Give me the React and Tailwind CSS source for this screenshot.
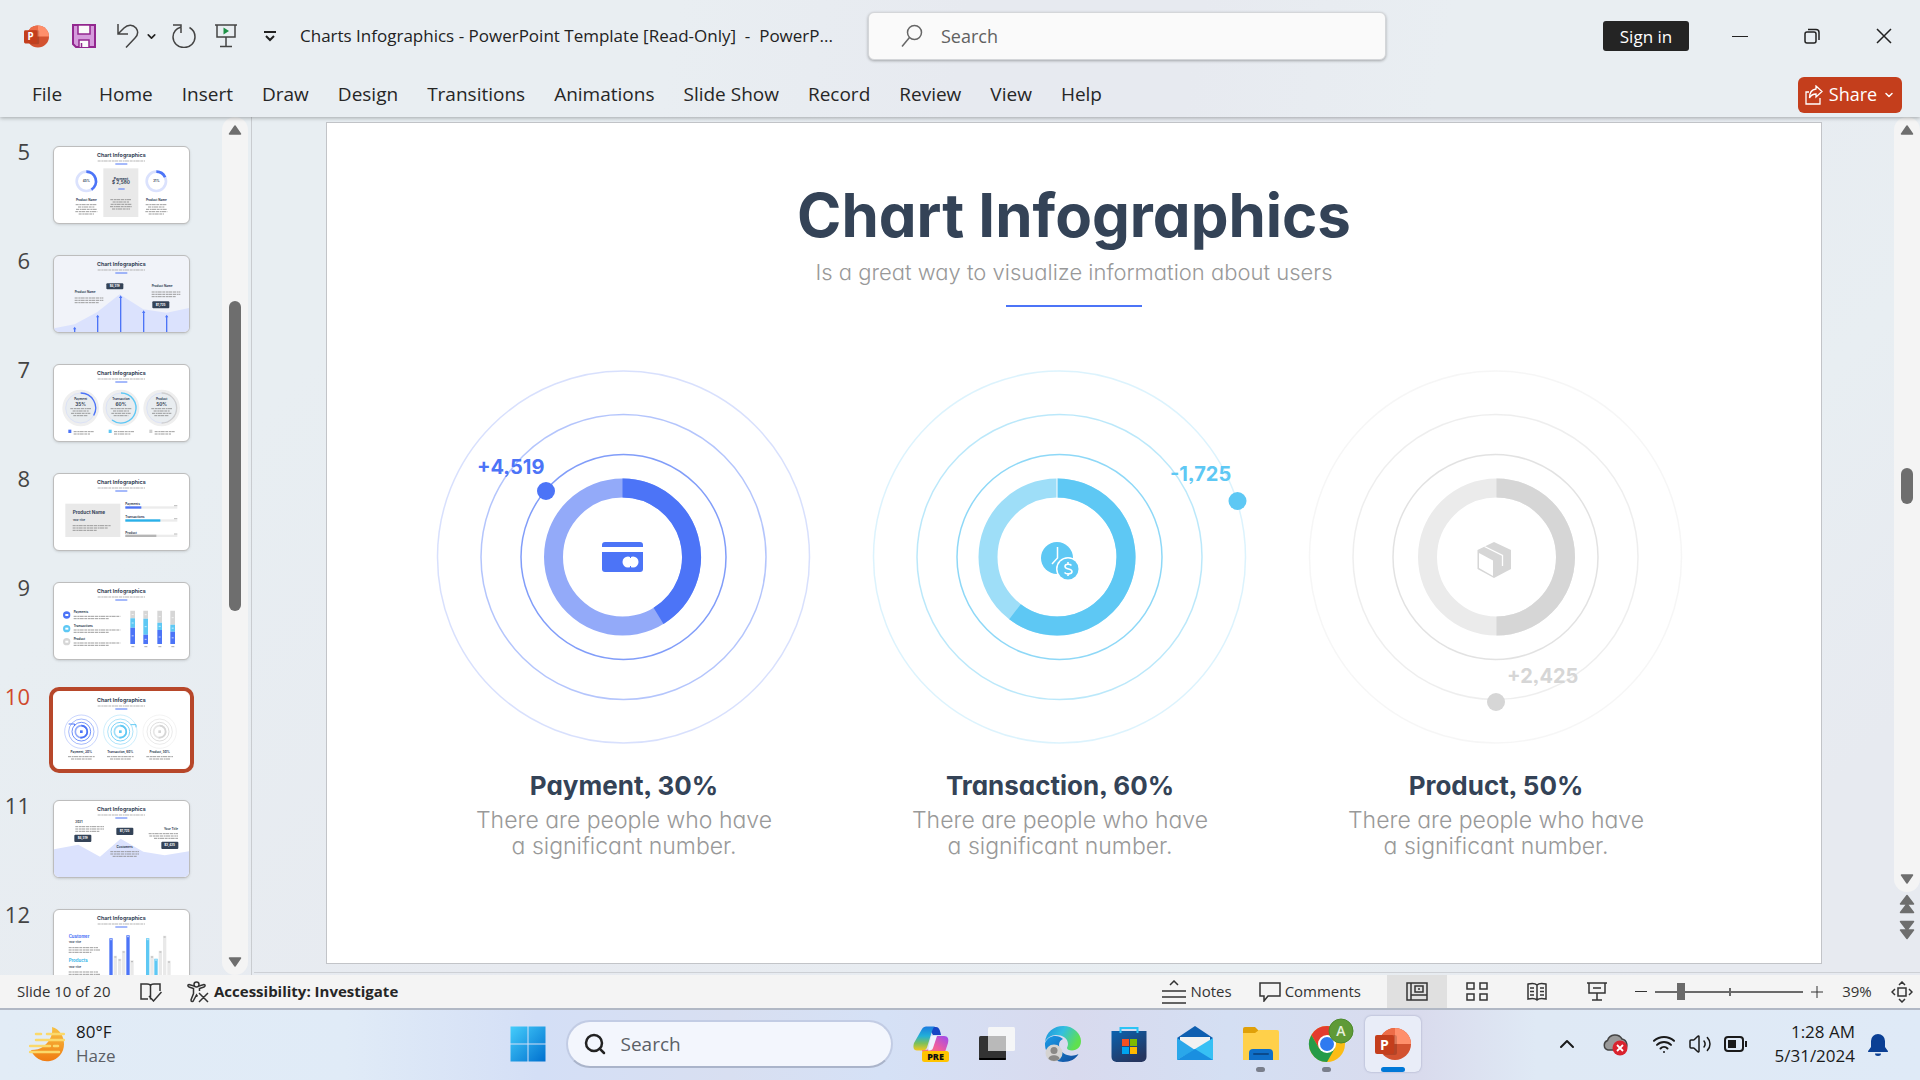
import React from "react";
import { Search, Wifi, Volume2, ChevronUp, ChevronDown } from "lucide-react";

const BLUE = "#4c74f7";
const CYAN = "#5ec8f4";
const GRAY = "#d6d6d6";
const INK = "#344357";

const polar = (cx, cy, r, deg) => {
  const a = ((deg - 90) * Math.PI) / 180;
  return [cx + r * Math.cos(a), cy + r * Math.sin(a)];
};

function Arc({ cx, cy, r, from, to, color, width }) {
  const [x1, y1] = polar(cx, cy, r, from);
  const [x2, y2] = polar(cx, cy, r, to);
  return (
    <path
      d={`M${x1} ${y1}A${r} ${r} 0 ${to - from > 180 ? 1 : 0} 1 ${x2} ${y2}`}
      fill="none"
      stroke={color}
      strokeWidth={width}
    />
  );
}

/* ---------- Logos and icons ---------- */

function PowerPointLogo({ className }) {
  return (
    <svg viewBox="0 0 36 36" className={className} aria-hidden="true">
      <circle cx="20" cy="18" r="16" fill="#d35230" />
      <path d="M20 2A16 16 0 0 0 4 18h16z" fill="#ed6c47" />
      <path d="M20 2a16 16 0 0 1 16 16H20z" fill="#ff8f6b" />
      <path d="M11 9h9a2 2 0 0 1 2 2v16a2 2 0 0 1-2 2H9z" fill="#000" opacity=".15" />
      <rect x="0" y="9" width="19" height="19" rx="2" fill="#c43e1c" />
      <text x="9.500" y="23.500" textAnchor="middle" fontSize="14" fontWeight="700" fill="#fff" fontFamily="Open Sans, sans-serif">P</text>
    </svg>
  );
}

function SaveIcon() {
  return (
    <svg viewBox="0 0 24 24" className="size-6" fill="none" aria-hidden="true">
      <path d="M1 1h22v22H4l-3-3z" fill="#d59bdc" stroke="#92278f" strokeWidth="2" />
      <path d="M6 1h12v9H6z" fill="#fafafa" stroke="#92278f" strokeWidth="1.500" />
      <path d="M7 23v-7h10v7" fill="#fafafa" stroke="#92278f" strokeWidth="1.500" />
      <path d="M9.500 23v-4" stroke="#92278f" strokeWidth="1.500" />
    </svg>
  );
}

function UndoIcon() {
  return (
    <svg viewBox="0 0 24 24" className="size-6" fill="none" stroke="#444" strokeWidth="1.500" aria-hidden="true">
      <path d="M2 0v10h10M2 10l6-6c4-4 9-3.500 12 0 2.500 3.500 2 7-1 10L10 23.500" />
    </svg>
  );
}

function RedoIcon() {
  return (
    <svg viewBox="0 0 24 24" className="size-6" fill="none" stroke="#444" strokeWidth="1.500" aria-hidden="true">
      <path d="M1 1h8v8M9 1v2C3 5 1 9 1 13a11 10.500 0 0 0 22 0c0-4-2-7.500-5.500-9.500" />
    </svg>
  );
}

function PresentIcon() {
  return (
    <svg viewBox="0 0 24 24" className="size-6" fill="none" stroke="#444" strokeWidth="1.500" aria-hidden="true">
      <path d="M1 1h22M3 1v12h18V1M12 13v9M6 22.500h12" />
      <path d="M9.500 3.500v7L15 7z" fill="#1f9246" stroke="none" />
    </svg>
  );
}

function CustomizeIcon() {
  return (
    <svg viewBox="0 0 12 12" className="size-3" fill="none" stroke="#222" strokeWidth="2" aria-hidden="true">
      <path d="M0 2h12M2 6l4 4 4-4" />
    </svg>
  );
}

function ShareIcon() {
  return (
    <svg viewBox="0 0 18 20" className="h-5 w-[18px]" fill="none" stroke="#fff" strokeWidth="1.300" aria-hidden="true">
      <path d="M4 7H1v12h14v-6" />
      <path d="M11 1l6 5.500L11 12V9C8 9 6 10 4.500 13 4.500 8 7 4.500 11 4z" />
    </svg>
  );
}

function ProofIcon() {
  return (
    <svg viewBox="0 0 22 20" className="h-5 w-[22px]" fill="none" stroke="#333" strokeWidth="1.500" aria-hidden="true">
      <path d="M10.500 3v14.500M8 17H1V2h6c2 0 3.500.5 3.500 2 0-1.500 1.500-2 3.500-2h6v7M9 14l4.500 5L21.500 10" />
    </svg>
  );
}

function AccessIcon() {
  return (
    <svg viewBox="0 0 22 22" className="size-[22px]" fill="none" stroke="#333" strokeWidth="1.500" aria-hidden="true">
      <circle cx="9.500" cy="3.500" r="2.500" />
      <path d="M7 5L2 3.500C.5 3.500.5 5.500 2 6l4.500 1.500v5L4 19c0 2 2 2 2.500.5L9.500 14l1 1.500M12 5l5-1.500c1.500 0 1.500 2 0 2.500l-4.500 1.500V10M12 12l9 9M21 12l-9 9" />
    </svg>
  );
}

function NotesIcon() {
  return (
    <svg viewBox="0 0 24 24" className="size-6" fill="none" stroke="#333" strokeWidth="1.500" aria-hidden="true">
      <path d="M8 5l4-4 4 4M0 11h24M0 17h24M0 23h24" />
    </svg>
  );
}

function CommentIcon() {
  return (
    <svg viewBox="0 0 22 20" className="h-5 w-[22px]" fill="none" stroke="#333" strokeWidth="1.500" aria-hidden="true">
      <path d="M1 1h20v13H9l-4 5v-5H1z" />
    </svg>
  );
}

function ViewIcon({ kind }) {
  const paths = {
    normal: "M1 1h20v17H1zM5 1v17M5 13h16M9 4h8v6H9zM12 7h2",
    sorter: "M1 1h7v6H1zM14 1h7v6h-7zM1 12h7v6H1zM14 12h7v6h-7z",
    reading: "M11 3v15M2 17V2c4-1 7-1 9 1 2-2 5-2 9-1v15c-4-1-7-1-9 1-2-2-5-2-9-1zM4 6h4M4 9.500h4M4 13h4M14 6h4M14 9.500h4M14 13h4",
    show: "M1 1h20M3 1v10h16V1M7 6h8M11 11v7M6 18h10",
  };
  return (
    <svg viewBox="0 0 22 19" className="h-[19px] w-[22px]" fill="none" stroke="#333" strokeWidth="1.500" aria-hidden="true">
      <path d={paths[kind]} />
    </svg>
  );
}

function FitIcon() {
  return (
    <svg viewBox="0 0 22 22" className="size-[22px]" fill="none" stroke="#333" strokeWidth="1.500" aria-hidden="true">
      <path d="M7 7h8v8H7zM8 4l3-3 3 3M8 18l3 3 3-3M4 8l-3 3 3 3M18 8l3 3-3 3" />
    </svg>
  );
}

function HazeIcon() {
  return (
    <svg viewBox="0 0 36 36" className="size-9" fill="none" strokeLinecap="round" aria-hidden="true">
      <defs>
        <linearGradient id="haze" x1="0" y1="0" x2="0" y2="1">
          <stop offset="0" stopColor="#f7c244" />
          <stop offset="1" stopColor="#f07c12" />
        </linearGradient>
      </defs>
      <path d="M23 1c8 2 12 10 12 17a17 17 0 0 1-33 6c5 0 9-1 13-4 6-5 9-11 8-19z" fill="url(#haze)" />
      <path d="M7 8h5M18 8h17M7 14h28M1 20h20M25 20h4M1 26h29" stroke="#fbd96b" strokeWidth="2.500" />
    </svg>
  );
}

function StartIcon() {
  return (
    <svg viewBox="0 0 36 36" className="size-9" aria-hidden="true">
      <defs>
        <linearGradient id="win" x1="0" y1="0" x2="1" y2="1">
          <stop offset="0" stopColor="#45cdfb" />
          <stop offset="1" stopColor="#0070cf" />
        </linearGradient>
      </defs>
      <path d="M.5.5h17v17H.5zM18.500.5h17v17h-17zM.5 18.500h17v17H.5zM18.500 18.500h17v17h-17z" fill="url(#win)" />
    </svg>
  );
}

function CopilotIcon() {
  return (
    <svg viewBox="0 0 36 36" className="size-9" aria-hidden="true">
      <defs>
        <linearGradient id="cpa" x1="0" y1="0" x2="0" y2="1">
          <stop offset="0" stopColor="#1b7be0" />
          <stop offset=".4" stopColor="#22b0d8" />
          <stop offset=".7" stopColor="#7cc05a" />
          <stop offset="1" stopColor="#f4c81d" />
        </linearGradient>
        <linearGradient id="cpb" x1="1" y1="0" x2="0" y2="1">
          <stop offset="0" stopColor="#9a4bf0" />
          <stop offset=".5" stopColor="#ee5ca0" />
          <stop offset="1" stopColor="#fb8a5c" />
        </linearGradient>
      </defs>
      <path d="M15 1h8c3 0 4 3 5 8h-8z" fill="#1745c4" />
      <path d="M9 3c1-2 3-2.500 6-2.500h7c-2 1-3 4-4 8l-4 13c-.7 2-2 3-4 3H4C0 24.500 0 20 1 17z" fill="url(#cpa)" />
      <path d="M21 10h10c4 0 5 3 4 7l-3 9c-1 2-2 3-4 3h-12c-3 0-7-1-7-5h3c3 0 4-1 5-4z" fill="url(#cpb)" />
      <path d="M18 10h6l-4 12c-.7 2-2 2.500-5 2.500z" fill="#eef3ff" />
      <rect x="9" y="25" width="27" height="11" rx="2.500" fill="#ffc400" />
      <text x="22.500" y="34" textAnchor="middle" fontSize="9" fontWeight="800" fill="#111" fontFamily="Open Sans, sans-serif">PRE</text>
    </svg>
  );
}

function TaskViewIcon() {
  return (
    <svg viewBox="0 0 36 36" className="size-9" aria-hidden="true">
      <rect x="0" y="10" width="27" height="24" rx="1.500" fill="#333" />
      <rect x="0" y="32" width="27" height="2" rx="1" fill="#000" />
      <rect x="9" y="1" width="27" height="24" rx="1.500" fill="#f7f7f7" opacity=".95" />
      <rect x="9" y="10" width="18" height="15" fill="#b9b9b9" />
    </svg>
  );
}

function EdgeIcon() {
  return (
    <svg viewBox="0 0 36 36" className="size-9" aria-hidden="true">
      <defs>
        <linearGradient id="ea" x1="0" y1="0" x2="1" y2=".4">
          <stop offset="0" stopColor="#1b8fdc" />
          <stop offset=".5" stopColor="#33bfe0" />
          <stop offset="1" stopColor="#5fe04f" />
        </linearGradient>
        <linearGradient id="eb" x1="0" y1="0" x2="1" y2="1">
          <stop offset="0" stopColor="#1a9be8" />
          <stop offset="1" stopColor="#114a9b" />
        </linearGradient>
      </defs>
      <path d="M0 17a18 18 0 0 0 18 19c7 0 13-3 15.500-8-3 1.500-6 2-9 1.500C18 28.500 14 24 14 19c0-3 1.500-5 4-6C13 8 3 9 0 17z" fill="url(#eb)" />
      <path d="M0 16C1 6 9 0 18 0c11 0 18 8 18 15 0 6-4 9.500-9 9.500-3 0-5-1-5-2.500 0-1 1-2 1-4C23 12 17 9 11 9 6 9 2 12 0 16z" fill="url(#ea)" />
      <circle cx="9" cy="27" r="8.500" fill="#d5d3d1" />
      <circle cx="9" cy="24.500" r="3.500" fill="#8a8886" />
      <path d="M3.500 33c0-5 11-5 11 0a8.500 8.500 0 0 1-11 0z" fill="#8a8886" />
    </svg>
  );
}

function StoreIcon() {
  return (
    <svg viewBox="0 0 36 36" className="size-9" aria-hidden="true">
      <defs>
        <linearGradient id="st" x1="0" y1="0" x2=".6" y2="1">
          <stop offset="0" stopColor="#0a62b0" />
          <stop offset="1" stopColor="#26365f" />
        </linearGradient>
      </defs>
      <path d="M.5 5h35v26a5 5 0 0 1-5 5h-25a5 5 0 0 1-5-5z" fill="url(#st)" />
      <path d="M9.500 7V2h17v5" fill="none" stroke="#2cc4f5" strokeWidth="2" />
      <path d="M11 13h7v7h-7z" fill="#f25022" />
      <path d="M19 13h7v7h-7z" fill="#7fba00" />
      <path d="M11 21h7v7h-7z" fill="#00a4ef" />
      <path d="M19 21h7v7h-7z" fill="#ffb900" />
    </svg>
  );
}

function MailIcon() {
  return (
    <svg viewBox="0 0 36 36" className="size-9" aria-hidden="true">
      <path d="M0 12L18 0l18 12-6 8H6z" fill="#0f5fb0" />
      <path d="M3 11h30v14H3z" fill="#f2f2f2" />
      <path d="M0 12l18 12L0 34z" fill="#2aa7ea" />
      <path d="M36 12v22H0z" fill="#37c0f4" />
      <path d="M0 34l18-11 18 11z" fill="#1a8fe0" />
    </svg>
  );
}

function ExplorerIcon() {
  return (
    <svg viewBox="0 0 36 36" className="size-9" aria-hidden="true">
      <path d="M0 3a2 2 0 0 1 2-2h10l4 4v6H0z" fill="#e0a008" />
      <path d="M0 7h12l4-3h18a2 2 0 0 1 2 2v28H0z" fill="#ffd04a" />
      <path d="M6 34v-7a4 4 0 0 1 4-4h16a4 4 0 0 1 4 4v7z" fill="#0f6fc8" />
      <path d="M11 28h14" stroke="#0a4a8c" strokeWidth="2" strokeLinecap="round" />
    </svg>
  );
}

function ChromeIcon() {
  return (
    <svg viewBox="0 0 36 36" className="size-9 overflow-visible" aria-hidden="true">
      <circle cx="18" cy="18" r="18" fill="#fbbc15" />
      <path d="M2.400 9A18 18 0 0 1 33.600 9H18L10.200 22.500z" fill="#e33b2e" />
      <path d="M2.400 9A18 18 0 0 0 18 36l7.800-13.500H10.200z" fill="#259b48" />
      <circle cx="18" cy="18" r="9" fill="#fff" />
      <circle cx="18" cy="18" r="7" fill="#2f7af0" />
      <circle cx="32" cy="5" r="12" fill="#5f9a37" stroke="#4b8a2c" />
      <text x="32" y="10" textAnchor="middle" fontSize="14" fill="#e6f0dc" fontFamily="Open Sans, sans-serif" fontWeight="600">A</text>
    </svg>
  );
}

/* ---------- Slide thumbnails ---------- */

function Lines({ x, y, w, anchor = "start", color = "#8a8a8a" }) {
  return w.map((len, i) => {
    const left = anchor === "middle" ? x - len / 2 : anchor === "end" ? x - len : x;
    return (
      <path key={i} d={`M${left} ${y + i * 7}h${len}`} stroke={color} strokeWidth="2.500" strokeDasharray="9 2 6 1 12 2" />
    );
  });
}

function T({ x, y, s = 9, c = INK, a = "start", children }) {
  return (
    <text x={x} y={y} fontSize={s} fill={c} textAnchor={a} fontWeight="700">
      {children}
    </text>
  );
}

function Bubble({ x, y, h = 22, label }) {
  return (
    <g>
      <rect x={x} y={y} width="51" height={h} rx="3" fill={INK} />
      <T x={x + 25} y={y + h / 2 + 3} s={9} c="#fff" a="middle">{label}</T>
    </g>
  );
}

function Thumb5() {
  return (
    <>
      {[[97, 148, "45%"], [307, 65, "21%"]].map(([x, to, label]) => (
        <g key={x}>
          <circle cx={x} cy="103" r="29" fill="none" stroke="#dbe2fd" strokeWidth="8" />
          <Arc cx={x} cy={103} r={29} from={0} to={to} color={BLUE} width={8} />
          <T x={x} y={106} s={9} a="middle">{label}</T>
          <T x={x} y={163} s={9} a="middle">Product Name</T>
          <Lines x={x} y={173} w={[64, 50, 62, 66, 46]} anchor="middle" />
        </g>
      ))}
      <rect x="148" y="64" width="105" height="146" fill="#e9e9e9" />
      <T x={201} y={98} s={10} a="middle">Payment</T>
      <T x={201} y={112} s={14} a="middle">$ 2,580</T>
      <path d="M193 126h19" stroke={BLUE} strokeWidth="3" />
      <Lines x={201} y={158} w={[64, 50, 62, 66, 54]} anchor="middle" />
    </>
  );
}

function Thumb6() {
  return (
    <>
      <path d="M0 217L62 205 130 168 197 115 268 160 338 170 405 156V231H0z" fill="#dbe2fd" />
      {[[62, 212], [131, 176], [200, 118], [269, 163], [338, 176]].map(([x, y]) => (
        <g key={x} fill={BLUE}>
          <path d={`M${x - 2} ${y + 5}h4V231h-4z`} />
          <path d={`M${x} ${y}l5 8h-10z`} />
        </g>
      ))}
      <T x={62} y={112}>Product Name</T>
      <Lines x={62} y={126} w={[86, 86, 72]} />
      <T x={293} y={94}>Product Name</T>
      <Lines x={293} y={108} w={[86, 86, 72]} />
      <Bubble x={157} y={82} h={18} label="$4,519" />
      <Bubble x={295} y={136} h={21} label="$1,725" />
    </>
  );
}

function Thumb7() {
  const rows = [[80, "Payment", "35%", BLUE, 120], [201, "Transaction", "60%", CYAN, 217], [323, "Product", "50%", "#cfcfcf", 180]];
  return rows.map(([x, name, pct, color, to]) => (
    <g key={x}>
      <circle cx={x} cy="129" r="55" fill="#efefef" />
      <circle cx={x} cy="129" r="45" fill="#e9edf0" stroke="#dce2f6" strokeWidth="3" />
      <Arc cx={x} cy={129} r={45} from={0} to={to} color={color} width={4} />
      <T x={x} y={105} s={9} a="middle">{name}</T>
      <T x={x} y={123} s={14} a="middle">{pct}</T>
      <Lines x={x} y={131} w={[62, 48, 58, 44]} anchor="middle" />
      <rect x={x - 37} y="194" width="9" height="10" fill={color} />
      <Lines x={x - 21} y={200} w={[60, 50]} />
    </g>
  ));
}

function Thumb8() {
  const rows = [[101, "Payments", BLUE, 48], [140, "Transactions", "#29b1ea", 105], [186, "Product", "#b5b5b5", 93]];
  return (
    <>
      <rect x="34" y="89" width="165" height="100" fill="#e9e9e9" />
      <T x={56} y={121} s={14}>Product Name</T>
      <T x={56} y={142} s={8}>Your Title</T>
      <Lines x={56} y={155} w={[115, 106, 72]} />
      {rows.map(([y, name, color, w]) => (
        <g key={y}>
          <T x={214} y={y - 7} s={9}>{name}</T>
          <rect x="214" y={y - 4} width="156" height="7" fill="#ececec" />
          <rect x="214" y={y - 4} width={w} height="7" fill={color} />
          <path d={`M360 ${y - 6}h10`} stroke="#999" strokeWidth="2" />
        </g>
      ))}
    </>
  );
}

function Thumb9() {
  const bars = [[229, 106, 134], [268, 107, 155], [310, 119, 141], [349, 125, 146]];
  return (
    <>
      {[[96, "Payments", BLUE], [137, "Transactions", CYAN], [176, "Product", GRAY]].map(([y, name, color]) => (
        <g key={y}>
          <circle cx="38" cy={y} r="11" fill={color} />
          <rect x="34" y={y - 3} width="9" height="6" fill="#fff" />
          <T x={59} y={y - 5}>{name}</T>
          <Lines x={59} y={y + 4} w={[140, 106]} />
        </g>
      ))}
      {bars.map(([x, a, b]) => (
        <g key={x}>
          <path d={`M${x} 83h14V${a}h-14z`} fill={GRAY} />
          <path d={`M${x} ${a}h14V${b}h-14z`} fill={CYAN} />
          <path d={`M${x} ${b}h14V183h-14z`} fill={BLUE} />
          <path d={`M${x + 3} 191h9`} stroke="#888" strokeWidth="2" />
          <path d={`M${x + 4} ${(83 + a) / 2}h6M${x + 4} ${(a + b) / 2}h6M${x + 4} ${(b + 183) / 2}h6`} stroke="#fff" strokeWidth="2" />
        </g>
      ))}
    </>
  );
}

function Thumb10() {
  const rows = [[82, "Payment, 30%", BLUE], [199, "Transaction, 60%", CYAN], [317, "Product, 50%", GRAY]];
  return (
    <>
      {rows.map(([x, name, color]) => (
        <g key={x}>
          <g fill="none" stroke={color} strokeWidth="3">
            <circle cx={x} cy="119" r="50" opacity=".3" />
            <circle cx={x} cy="119" r="38" opacity=".5" />
            <circle cx={x} cy="119" r="28" opacity=".8" />
          </g>
          <circle cx={x} cy="119" r="18" fill="none" stroke={color} strokeWidth="5" opacity=".6" />
          <Arc cx={x} cy={119} r={18} from={0} to={190} color={color} width={5} />
          <rect x={x - 4} y="115" width="8" height="8" fill={color} />
          <T x={x} y={184} a="middle" s={9}>{name}</T>
          <Lines x={x} y={194} w={[80, 62]} anchor="middle" />
        </g>
      ))}
      <path d="M44 96h18v6" fill="none" stroke={BLUE} strokeWidth="3" />
      <path d="M230 98h16v8" fill="none" stroke={CYAN} strokeWidth="3" />
    </>
  );
}

function Thumb11() {
  return (
    <>
      <path d="M0 145L73 131 138 167 200 113 268 152 332 163 405 151V231H0z" fill="#dbe2fd" />
      <T x={64} y={67}>2021</T>
      <Lines x={64} y={77} w={[86, 86, 72]} />
      <T x={372} y={88} a="end">Your Title</T>
      <Lines x={372} y={98} w={[88, 86, 72]} anchor="end" />
      <T x={212} y={142} a="middle">Customers</T>
      <Lines x={212} y={152} w={[86, 86, 72]} anchor="middle" />
      <Bubble x={61} y={101} label="$4,519" />
      <Bubble x={187} y={80} label="$1,725" />
      <Bubble x={322} y={122} label="$2,425" />
    </>
  );
}

function Thumb12() {
  const bars = [
    [166, 85, BLUE], [179, 137], [192, 146], [204, 122], [217, 76, BLUE], [229, 151],
    [276, 85, CYAN], [289, 137], [301, 146, CYAN], [314, 122], [327, 77], [340, 152],
  ];
  return (
    <>
      <T x={44} y={84} s={13} c={BLUE}>Customer</T>
      <T x={44} y={100} s={8}>Your Title</T>
      <Lines x={44} y={113} w={[88, 94, 68]} />
      <T x={44} y={156} s={13} c="#3cb8ea">Products</T>
      <T x={44} y={174} s={8}>Your Title</T>
      <Lines x={44} y={186} w={[88, 94, 68]} />
      {bars.map(([x, y, color]) => (
        <g key={x}>
          <path d={`M${x} ${y}h10V231h-10z`} fill={color || "#e9e9e9"} />
          <path d={`M${x + 2} ${y + 4}h6`} stroke={color ? "#fff" : "#999"} strokeWidth="2" />
        </g>
      ))}
    </>
  );
}

const thumbs = [
  [5, Thumb5], [6, Thumb6], [7, Thumb7], [8, Thumb8], [9, Thumb9], [10, Thumb10], [11, Thumb11], [12, Thumb12],
];

function Thumbnail({ number, Body }) {
  const selected = number === 10;
  return (
    <li className="flex shrink-0 items-start gap-[23px]">
      <span className={`w-[30px] text-right text-[22px] leading-[10px] ${selected ? "text-[#d0492c]" : "text-[#444]"}`}>
        {number}
      </span>
      <button
        aria-label={`Slide ${number}`}
        className={`h-[78px] w-[137px] overflow-hidden rounded-md border ${
          selected ? "border-white ring-4 ring-[#b7472a]" : "border-[#bdbdbd] shadow-sm"
        } ${number === 6 ? "bg-[#f1f3f9]" : "bg-white"}`}
      >
        <svg viewBox="0 0 405 231" className="block w-full" fontFamily="Inter, sans-serif" aria-hidden="true">
          <text x="202" y="31" textAnchor="middle" fontSize="16" fontWeight="700" fill={INK}>Chart Infographics</text>
          <Lines x={202} y={42} w={[142]} anchor="middle" color="#a5a5a5" />
          <path d="M184 51h36" stroke={BLUE} strokeWidth="3" />
          <Body />
        </svg>
      </button>
    </li>
  );
}

/* ---------- Slide content ---------- */

function CardGlyph() {
  return (
    <g fill={BLUE}>
      <path d="M196 199a3 3 0 0 1 3-3h35a3 3 0 0 1 3 3v2h-41z" />
      <path d="M196 206h41v17a3 3 0 0 1-3 3h-35a3 3 0 0 1-3-3z" />
      <circle cx="222" cy="216" r="5.500" fill="#fff" />
      <circle cx="227" cy="216" r="5.500" fill="#fff" />
      <path d="M224.500 209v3M224.500 220v3" stroke={BLUE} strokeWidth="1" />
    </g>
  );
}

function ClockGlyph() {
  return (
    <g>
      <circle cx="215" cy="212" r="16" fill={CYAN} />
      <path d="M215.500 201v11l-5.500 6" fill="none" stroke="#fff" strokeWidth="1.500" />
      <circle cx="226" cy="223" r="12" fill="#fff" />
      <circle cx="226" cy="223" r="10.500" fill={CYAN} />
      <path d="M229.500 219.500c-1.500-1.500-6.500-2-6.500 1 0 3.500 7 1.500 7 5 0 3-5.500 3-7.500 1M226 216v2M226 228v2" fill="none" stroke="#fff" strokeWidth="1.600" />
    </g>
  );
}

function BoxGlyph() {
  return (
    <g>
      <path d="M216 196l17 8v19l-17 9-16.500-9v-19z" fill={GRAY} />
      <path d="M201 207l14 7.500v15.500l-14-8z" fill="#fff" />
      <path d="M206.500 200.500l18 9V220" fill="none" stroke="#fff" strokeWidth="1.300" />
    </g>
  );
}

const charts = [
  { color: BLUE, soft: "#93aaf9", name: "Payment, 30%", to: 148.5, cx: 216.5, dot: [140, 145], label: "+4,519", lx: 71, ly: 128, Glyph: CardGlyph },
  { color: CYAN, soft: "#9edef8", name: "Transaction, 60%", to: 217.5, cx: 215, dot: [395.5, 155], label: "-1,725", lx: 328, ly: 135, Glyph: ClockGlyph },
  { color: GRAY, soft: "#ebebeb", name: "Product, 50%", to: 180, cx: 218.5, dot: [218, 356], label: "+2,425", lx: 229, ly: 337, Glyph: BoxGlyph },
];

function ChartCard({ chart }) {
  const { color, soft, name, to, cx, dot, label, lx, ly, Glyph } = chart;
  return (
    <article className="flex flex-col items-center">
      <svg viewBox="0 0 436 412" className="block w-full" role="img" aria-label={name}>
        <g fill="none" stroke={color} strokeWidth="1.500">
          <circle cx="217.500" cy="211" r="186" opacity=".22" />
          <circle cx="217.500" cy="211" r="142.500" opacity=".42" />
          <circle cx="217.500" cy="211" r="102.500" opacity=".7" />
        </g>
        <circle cx={cx} cy="211" r="69" fill="none" stroke={soft} strokeWidth="19" />
        <Arc cx={cx} cy={211} r={69} from={0} to={to} color={color} width={19} />
        {color === CYAN && <path d="M215 132v20" stroke="#fff" strokeWidth="1" />}
        <Glyph />
        <circle cx={dot[0]} cy={dot[1]} r="9" fill={color} />
        <text x={lx} y={ly} fontSize="20" fontWeight="700" fill={color}>{label}</text>
      </svg>
      <h2 className="mt-2 text-[26px] leading-10 font-bold text-[#344357]">{name}</h2>
      <p className="mt-px text-center text-[23px] leading-[26px] font-light text-[#999]">
        There are people who have
        <br />a significant number.
      </p>
    </article>
  );
}

/* ---------- Scroll bars ---------- */

function Triangle({ down }) {
  return (
    <svg viewBox="0 0 14 10" className="h-[10px] w-[14px]" aria-hidden="true">
      <path d={down ? "M1.500 1h11L7 9z" : "M1.500 9h11L7 1z"} fill="#6e6e6e" stroke="#6e6e6e" strokeWidth="1.500" strokeLinejoin="round" />
    </svg>
  );
}

function DoubleTriangle({ down }) {
  return (
    <svg viewBox="0 0 16 20" className="h-5 w-4" aria-hidden="true">
      <path
        d={down ? "M1.500 1.500h13L8 10zM1.500 10h13L8 18.500z" : "M1.500 10h13L8 1.500zM1.500 18.500h13L8 10z"}
        fill="#6e6e6e"
        stroke="#6e6e6e"
        strokeWidth="1.500"
        strokeLinejoin="round"
      />
    </svg>
  );
}

/* ---------- Window ---------- */

const tabs = ["Home", "Insert", "Draw", "Design", "Transitions", "Animations", "Slide Show", "Record", "Review", "View", "Help"];

function TitleBar() {
  return (
    <header className="relative z-10 bg-[linear-gradient(100deg,#e9eef2_35%,#e7eaf0_50%,#e7eaf0_62%,#e9eef2_75%)] shadow-[0_1px_4px_rgba(0,0,0,0.3)]">
      <div className="flex h-[72px] items-center pl-6 text-[#222]">
        <PowerPointLogo className="size-[25px] shrink-0" />
        <div className="ml-[23px] flex shrink-0 items-center">
          <button aria-label="Save"><SaveIcon /></button>
          <button aria-label="Undo" className="ml-5"><UndoIcon /></button>
          <button aria-label="Undo options" className="ml-[5px]"><ChevronDown className="size-[13px]" strokeWidth={3} /></button>
          <button aria-label="Redo" className="ml-[14px]"><RedoIcon /></button>
          <button aria-label="Start from beginning" className="ml-[18px]"><PresentIcon /></button>
          <button aria-label="Customize toolbar" className="ml-[26px]"><CustomizeIcon /></button>
        </div>
        <h1 className="ml-6 w-[568px] shrink-0 text-[17px] whitespace-pre">
          Charts Infographics - PowerPoint Template [Read-Only]  -  PowerP...
        </h1>
        <label className="flex h-12 w-[518px] items-center rounded-md border border-[#d4d6d9] bg-[#fafafa] pl-8 shadow-[0_1px_3px_rgba(0,0,0,0.3)]">
          <svg viewBox="0 0 22 24" className="h-6 w-[22px] shrink-0" fill="none" stroke="#666" strokeWidth="1.500" aria-hidden="true">
            <circle cx="13.500" cy="8.500" r="7" />
            <path d="M8.500 13.500L1 22.500" />
          </svg>
          <input aria-label="Search" placeholder="Search" className="ml-[18px] w-full bg-transparent text-[18px] outline-none placeholder:text-[#616161]" />
        </label>
        <div className="ml-auto flex items-center">
          <button className="h-[30px] w-[86px] rounded-[3px] bg-[#242424] text-[17px] leading-none text-white">Sign in</button>
          <button aria-label="Minimize" className="ml-[15px] flex h-9 w-[72px] items-center justify-center">
            <span className="h-px w-4 bg-[#222]" />
          </button>
          <button aria-label="Restore" className="flex h-9 w-[72px] items-center justify-center">
            <svg viewBox="0 0 16 16" className="size-4" fill="none" stroke="#222" strokeWidth="1.500" aria-hidden="true">
              <rect x="1" y="4" width="11" height="11" rx="2" />
              <path d="M4 1.500h8a3 3 0 0 1 3 3V12" />
            </svg>
          </button>
          <button aria-label="Close" className="flex h-9 w-[72px] items-center justify-center">
            <svg viewBox="0 0 16 16" className="size-4" stroke="#222" strokeWidth="1.500" aria-hidden="true">
              <path d="M1 1l14 14M15 1L1 15" />
            </svg>
          </button>
        </div>
      </div>
      <nav className="flex h-[45px] items-center pr-[18px] pl-8 text-[19px] text-[#262626]">
        <button className="mr-[37px]">File</button>
        <div className="flex gap-[29px]">
          {tabs.map((t) => (
            <button key={t} className="whitespace-nowrap">{t}</button>
          ))}
        </div>
        <button className="ml-auto flex h-9 w-[104px] items-center justify-center gap-[6px] rounded-md bg-[#c43e1c] text-[18px] text-white">
          <ShareIcon />
          Share
          <ChevronDown className="size-3" strokeWidth={3} />
        </button>
      </nav>
    </header>
  );
}

function Workspace() {
  return (
    <main className="flex min-h-0 flex-1 bg-[linear-gradient(135deg,#e8eef2_20%,#e7eaf0_50%,#e8eef2_75%,#e7eaf0_90%)]">
      <aside className="flex w-[252px] shrink-0 border-r border-[#c9ccd0] pr-[3px]">
        <ol className="flex h-full flex-1 flex-col gap-[31px] overflow-hidden pt-[29px]">
          {thumbs.map(([n, Body]) => (
            <Thumbnail key={n} number={n} Body={Body} />
          ))}
        </ol>
        <div className="flex w-[26px] flex-col items-center rounded-full bg-[#f4f4f4] py-2">
          <Triangle />
          <div className="mt-[166px] h-[310px] w-3 rounded-full bg-[#6e6e6e]" />
          <div className="mt-auto"><Triangle down /></div>
        </div>
      </aside>
      <section className="flex min-w-0 flex-1 flex-col">
        <div className="flex min-h-0 flex-1">
          <div className="flex-1 pt-[5px] pr-[72px] pl-[74px]">
            <div className="aspect-[1496/842] w-full border border-[#c2c4c8] bg-white font-[Inter,sans-serif] [font-feature-settings:'cv11','ss03']">
              <div className="flex flex-col items-center pt-[52px]">
                <h1 className="text-[60px] leading-[80px] font-bold text-[#344357]">Chart Infographics</h1>
                <p className="mt-px text-[22px] leading-8 font-light text-[#999]">Is a great way to visualize information about users</p>
                <span className="mt-[17px] h-[2px] w-[136px] bg-[#4c74f7]" />
              </div>
              <div className="mt-[39px] grid grid-cols-3 pr-[107px] pl-[79px]">
                {charts.map((c) => (
                  <ChartCard key={c.name} chart={c} />
                ))}
              </div>
            </div>
          </div>
          <div className="flex w-[26px] flex-col items-center">
            <div className="flex w-full flex-1 flex-col items-center rounded-full bg-[#f4f4f4] py-2">
              <Triangle />
              <div className="mt-[333px] h-9 w-3 rounded-full bg-[#6e6e6e]" />
              <div className="mt-auto"><Triangle down /></div>
            </div>
            <div className="flex h-[80px] flex-col items-center gap-[6px] pt-[2px]">
              <DoubleTriangle />
              <DoubleTriangle down />
            </div>
          </div>
        </div>
        <div className="ml-[2px] h-[3px] border-t border-[#cdd0d5]" />
      </section>
    </main>
  );
}

function StatusBar() {
  return (
    <footer className="flex h-[35px] shrink-0 items-center border-b-2 border-[#b1b8c5] bg-[#f4f4f4] pr-[7px] pl-[17px] text-[15px] text-[#333]">
      <span className="w-[123px]">Slide 10 of 20</span>
      <button aria-label="Spelling"><ProofIcon /></button>
      <button className="ml-[25px] flex items-center gap-[5px] font-bold text-[#262626]">
        <AccessIcon />
        Accessibility: Investigate
      </button>
      <div className="ml-auto flex h-full items-center">
        <button className="flex items-center gap-1"><NotesIcon />Notes</button>
        <button className="mr-[26px] ml-[27px] flex items-center gap-1"><CommentIcon />Comments</button>
        <button aria-label="Normal view" className="flex h-full w-[60px] items-center justify-center bg-[#e0e0e0]"><ViewIcon kind="normal" /></button>
        <button aria-label="Slide sorter" className="flex w-[60px] justify-center"><ViewIcon kind="sorter" /></button>
        <button aria-label="Reading view" className="flex w-[60px] justify-center"><ViewIcon kind="reading" /></button>
        <button aria-label="Slide show" className="flex w-[60px] justify-center"><ViewIcon kind="show" /></button>
        <button aria-label="Zoom out" className="mr-2 ml-2 flex h-4 w-3 items-center"><span className="h-px w-3 bg-[#333]" /></button>
        <span className="relative flex h-5 w-[148px] items-center">
          <input
            type="range"
            aria-label="Zoom"
            min="0"
            max="100"
            defaultValue="16"
            className="h-[2px] w-full appearance-none bg-[#6a6a6a] [&::-webkit-slider-thumb]:h-[17px] [&::-webkit-slider-thumb]:w-2 [&::-webkit-slider-thumb]:appearance-none [&::-webkit-slider-thumb]:bg-[#6a6a6a]"
          />
          <span className="absolute left-1/2 h-2 w-[2px] bg-[#6a6a6a]" />
        </span>
        <button aria-label="Zoom in" className="ml-2 flex h-4 w-3 items-center">
          <svg viewBox="0 0 12 12" className="size-3" stroke="#333" aria-hidden="true"><path d="M0 6h12M6 0v12" /></svg>
        </button>
        <span className="w-[68px] text-center">39%</span>
        <button aria-label="Fit slide to window"><FitIcon /></button>
      </div>
    </footer>
  );
}

const apps = [
  ["Copilot", CopilotIcon], ["Task view", TaskViewIcon], ["Edge", EdgeIcon], ["Store", StoreIcon],
  ["Mail", MailIcon], ["File Explorer", ExplorerIcon, true], ["Chrome", ChromeIcon, true],
];

function Taskbar() {
  return (
    <div className="grid h-[70px] shrink-0 grid-cols-[1fr_auto_1fr] items-center bg-[linear-gradient(90deg,#e2ecf6_0%,#e0ebf7_18%,#d4dff6_28%,#d8dff1_38%,#d5e1f6_46%,#d8daee_56%,#d4dff3_64%,#d9dbed_74%,#dfe9f5_80%,#dfeaf7_100%)] pb-[2px]">
      <button className="flex items-center gap-[11px] pl-[29px] text-left">
        <HazeIcon />
        <span className="flex flex-col text-[17px] leading-6">
          <span className="text-[#1a1a1a]">80°F</span>
          <span className="text-[#5c5f66]">Haze</span>
        </span>
      </button>
      <div className="flex items-center gap-[10px]">
        <button aria-label="Start" className="flex size-14 items-center justify-center"><StartIcon /></button>
        <label className="flex h-12 w-[327px] items-center rounded-full border-2 border-b-[#aab4ca] border-[#c2cce4] bg-[#f3f6fd] pl-[15px]">
          <Search className="size-6 shrink-0 text-[#222]" strokeWidth={2.5} />
          <input aria-label="Taskbar search" placeholder="Search" className="ml-[14px] w-full bg-transparent text-[19px] outline-none placeholder:text-[#5b5f66]" />
        </label>
        {apps.map(([name, Icon, running]) => (
          <button key={name} aria-label={name} className="relative flex size-14 items-center justify-center">
            <Icon />
            {running && <span className="absolute bottom-0 h-[5px] w-[9px] rounded-full bg-[#7a7f8c]" />}
          </button>
        ))}
        <button aria-label="PowerPoint" className="relative flex size-14 items-center justify-center rounded-md bg-[#e9edf8] shadow-[0_0_2px_rgba(90,100,140,0.5)]">
          <PowerPointLogo className="size-9" />
          <span className="absolute bottom-0 h-[5px] w-6 rounded-full bg-[#0078d7]" />
        </button>
      </div>
      <div className="flex items-center justify-end pr-8 text-[#1a1a1a]">
        <button aria-label="Show hidden icons"><ChevronUp className="size-6" /></button>
        <button aria-label="OneDrive" className="ml-[23px]">
          <svg viewBox="0 0 26 24" className="h-6 w-[26px]" aria-hidden="true">
            <path d="M6 18a5 5 0 0 1-.5-9.500A8 8 0 0 1 20 7a6 6 0 0 1 2 11z" fill="#9a9a9a" stroke="#444" strokeWidth="1.500" />
            <circle cx="18" cy="16" r="7.500" fill="#d9232e" />
            <path d="M15 13l6 6M21 13l-6 6" stroke="#fff" strokeWidth="1.800" />
          </svg>
        </button>
        <button aria-label="Network, volume and battery" className="ml-6 flex items-center gap-3">
          <Wifi className="size-6" />
          <Volume2 className="size-6" strokeWidth={1.5} />
          <svg viewBox="0 0 24 16" className="h-4 w-6" fill="none" stroke="currentColor" strokeWidth="2" aria-hidden="true">
            <rect x="1" y="1" width="18" height="14" rx="3" />
            <path d="M4 4h8v8H4z" fill="currentColor" stroke="none" />
            <path d="M22 5v6" />
          </svg>
        </button>
        <button className="ml-[26px] text-right text-[17px] leading-6">
          1:28 AM
          <br />
          5/31/2024
        </button>
        <button aria-label="Notifications" className="ml-[13px]">
          <svg viewBox="0 0 20 24" className="h-6 w-5" fill="#0a3f94" aria-hidden="true">
            <path d="M3 9a7 7 0 0 1 14 0v6l2.500 3.500a.8.8 0 0 1-.6 1.500H1.100a.8.8 0 0 1-.6-1.500L3 15zM7 21.500h6a3 2.500 0 0 1-6 0z" />
          </svg>
        </button>
      </div>
    </div>
  );
}

export default function App() {
  return (
    <div className="flex h-screen flex-col overflow-hidden font-['Open_Sans',sans-serif]">
      <TitleBar />
      <Workspace />
      <StatusBar />
      <Taskbar />
    </div>
  );
}
